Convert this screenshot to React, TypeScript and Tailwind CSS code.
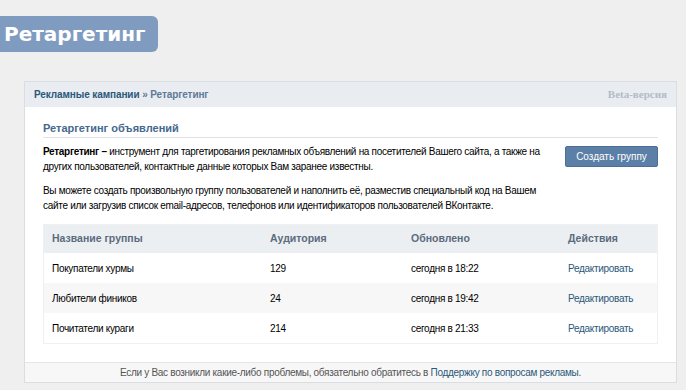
import React from 'react'

const groups = [
  { name: 'Покупатели хурмы', audience: 129, updated: 'сегодня в 18:22' },
  { name: 'Любители фиников', audience: 24, updated: 'сегодня в 19:42' },
  { name: 'Почитатели кураги', audience: 214, updated: 'сегодня в 21:33' },
]

const App = () => {
  return (
    <div className="w-[686px] h-[390px] overflow-hidden bg-[#efefef] font-['Liberation_Sans',Arial,sans-serif] text-[10px] tracking-[-0.3px] text-black">
      {/* плашка заголовка */}
      <div className="pt-4">
        <div className="w-[158px] h-9 bg-[#7f9cc0] rounded-r-md flex items-center pl-1">
          <span className="text-white font-bold text-[20px] leading-none tracking-normal font-['DejaVu_Sans',sans-serif]">Ретаргетинг</span>
        </div>
      </div>

      {/* панель */}
      <div className="mt-[29px] ml-6 w-[653px] border border-[#dadee3] bg-white">
        <div className="h-[25px] bg-[#e9edf1] flex items-center justify-between pl-[9px] pr-[9px]">
          <div className="font-bold text-[10px] tracking-[-0.1px]">
            <span className="text-[#2b587a]">Рекламные кампании</span>
            <span className="text-[#5f7a94]"> » Ретаргетинг</span>
          </div>
          <span className="font-['Liberation_Serif',serif] font-bold text-[11px] tracking-normal text-[#b3bcc7]">Beta-версия</span>
        </div>

        <div className="px-[18px] pt-[13px] pb-[18px]">
          <div className="border-b border-[#dfe3e8] pb-px">
            <h2 className="font-bold text-[11px] tracking-normal leading-4 text-[#45688e]">Ретаргетинг объявлений</h2>
          </div>

          <div className="flex justify-between items-start mt-[6px]">
            <p className="leading-[15px] whitespace-nowrap">
              <b>Ретаргетинг –</b> инструмент для таргетирования рекламных объявлений на посетителей Вашего сайта, а также на
              <br />
              других пользователей, контактные данные которых Вам заранее известны.
            </p>
            <button className="mt-[2px] h-[21px] w-[93px] shrink-0 rounded-[2px] bg-[#5b7fa6] border border-[#4d6f94] text-white text-[10px] tracking-normal leading-none">
              Создать группу
            </button>
          </div>

          <p className="mt-[9px] leading-[15px] whitespace-nowrap">
            Вы можете создать произвольную группу пользователей и наполнить её, разместив специальный код на Вашем
            <br />
            сайте или загрузив список email-адресов, телефонов или идентификаторов пользователей ВКонтакте.
          </p>

          {/* таблица групп */}
          <div className="mt-[11px] border border-[#eef0f2]">
            <div className="grid grid-cols-[218px_141px_157px_1fr] h-[28px] items-center bg-[#eceff2] font-bold text-[10.5px] tracking-normal text-[#5b6b7d]">
              <div className="pl-2">Название группы</div>
              <div className="pl-2">Аудитория</div>
              <div className="pl-2">Обновлено</div>
              <div className="pl-2">Действия</div>
            </div>
            {groups.map((g, i) => (
              <div
                key={g.name}
                className={`grid grid-cols-[218px_141px_157px_1fr] h-[30px] items-center ${i % 2 === 1 ? 'bg-[#f7f7f7]' : 'bg-white'}`}
              >
                <div className="pl-2">{g.name}</div>
                <div className="pl-2">{g.audience}</div>
                <div className="pl-2">{g.updated}</div>
                <div className="pl-2 text-[#2b587a]">Редактировать</div>
              </div>
            ))}
          </div>
        </div>

        <div className="h-[20px] bg-[#f7f7f7] border-t border-[#e4e6e9] flex items-center justify-center text-[#555]">
          <span>
            Если у Вас возникли какие-либо проблемы, обязательно обратитесь в{' '}
            <span className="text-[#2b587a]">Поддержку по вопросам рекламы</span>.
          </span>
        </div>
      </div>
    </div>
  )
}

export default App
